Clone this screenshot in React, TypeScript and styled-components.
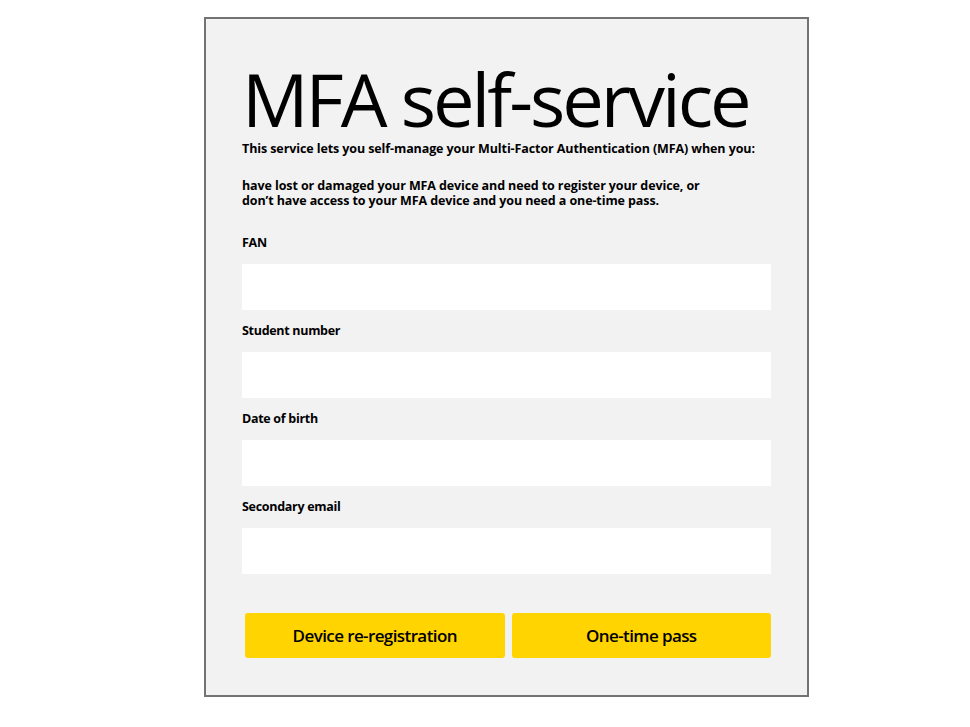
import React from 'react';
import styled, { createGlobalStyle } from 'styled-components';

const GlobalStyle = createGlobalStyle`
  html, body {
    margin: 0;
    padding: 0;
    background: #ffffff;
  }

  body {
    font-family: 'Open Sans', 'Noto Sans', sans-serif;
    color: #000;
  }
`;

const FIELDS = [
  { id: 'fan', label: 'FAN', type: 'text' },
  { id: 'student-number', label: 'Student number', type: 'text' },
  { id: 'dob', label: 'Date of birth', type: 'text' },
  { id: 'secondary-email', label: 'Secondary email', type: 'email' }
];

const App: React.FC = () => {
  return (
    <Page>
      <GlobalStyle />
      <Panel>
        <Title>MFA self-service</Title>
        <Intro>
          This service lets you self-manage your Multi-Factor Authentication
          (MFA) when you:
        </Intro>
        <Reasons>
          <li>have lost or damaged your MFA device and need to register your device, or</li>
          <li>don’t have access to your MFA device and you need a one-time pass.</li>
        </Reasons>
        <Form onSubmit={(e) => e.preventDefault()}>
          {FIELDS.map((field) => (
            <Field key={field.id}>
              <Label htmlFor={field.id}>{field.label}</Label>
              <Input id={field.id} type={field.type} />
            </Field>
          ))}
          <Actions>
            <ActionButton type="button">Device re-registration</ActionButton>
            <ActionButton type="submit">One-time pass</ActionButton>
          </Actions>
        </Form>
      </Panel>
    </Page>
  );
};

export default App;

const Page = styled.div`
  width: 970px;
  height: 727px;
  padding-top: 17px;
  padding-left: 204px;
  box-sizing: border-box;
`;

const Panel = styled.section`
  width: 605px;
  height: 680px;
  box-sizing: border-box;
  border: 2px solid #737373;
  background: #f2f2f2;
  padding: 43px 36px 0 36px;
  display: flex;
  flex-direction: column;
`;

const Title = styled.h1`
  margin: 0;
  font-size: 74px;
  line-height: 74px;
  font-weight: 400;
  letter-spacing: -3px;
`;

const Intro = styled.p`
  margin: 5px 0 22px;
  font-size: 12.5px;
  line-height: 15px;
  font-weight: 700;
  letter-spacing: -0.1px;
`;

const Reasons = styled.ul`
  margin: 0;
  padding: 0;
  list-style: none;
  font-size: 12.5px;
  line-height: 15px;
  font-weight: 700;
  letter-spacing: -0.1px;
`;

const Form = styled.form`
  display: flex;
  flex-direction: column;
  margin-top: 27px;
`;

const Field = styled.div`
  display: flex;
  flex-direction: column;

  & + & {
    margin-top: 13px;
  }
`;

const Label = styled.label`
  font-size: 12.5px;
  line-height: 15px;
  font-weight: 700;
  letter-spacing: -0.3px;
  margin-bottom: 14px;
`;

const Input = styled.input`
  height: 46px;
  border: 0;
  background: #ffffff;
  padding: 0 10px;
  box-sizing: border-box;
  font: inherit;
  outline: none;
`;

const Actions = styled.div`
  display: flex;
  gap: 7px;
  margin-top: 39px;
  padding-left: 3px;
`;

const ActionButton = styled.button`
  flex: 1;
  height: 45px;
  border: 0;
  border-radius: 3px;
  background: #ffd400;
  font-family: 'Open Sans', 'Noto Sans', sans-serif;
  font-size: 17px;
  font-weight: 600;
  letter-spacing: -0.6px;
  color: #000;
  cursor: pointer;
`;
